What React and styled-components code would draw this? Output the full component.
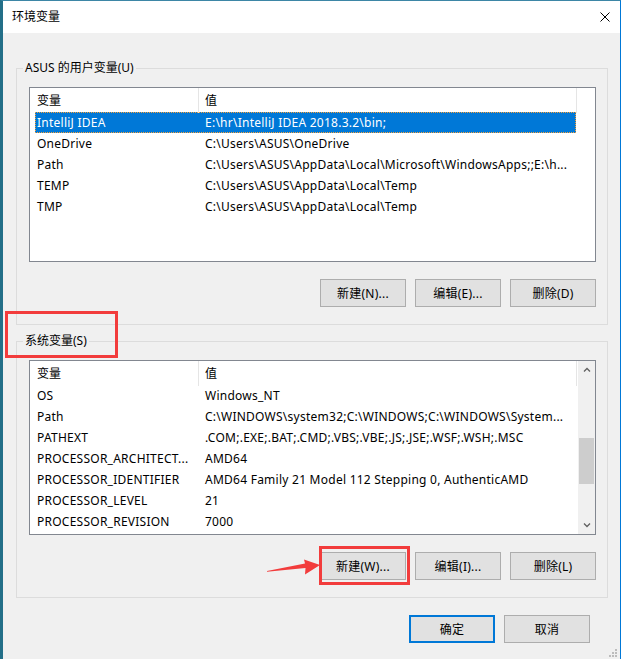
import React from "react";
import styled, { createGlobalStyle } from "styled-components";

const GlobalStyle = createGlobalStyle`
  html, body {
    margin: 0;
    padding: 0;
  }
  body {
    background: #1f6c85;
    font-family: "Microsoft YaHei UI", "Segoe UI", "Noto Sans", "Noto Sans CJK SC", sans-serif;
    font-size: 12px;
    color: #000;
  }
  *, *::before, *::after {
    box-sizing: border-box;
  }
`;

const Window = styled.div`
  width: 621px;
  height: 659px;
  display: flex;
  flex-direction: column;
  background: #f0f0f0;
  border-left: 3px solid #236f88;
  border-top: 1px solid #3d86a6;
  border-right: 1px solid #0078d7;
`;

const TitleBar = styled.div`
  height: 32px;
  flex: none;
  display: flex;
  align-items: center;
  justify-content: space-between;
  padding: 0 10px 0 9px;
  background: #fff;
`;

const Title = styled.span`
  line-height: 16px;
`;

const CloseIcon = styled.svg`
  display: block;
  width: 10px;
  height: 10px;
`;

const Body = styled.div`
  flex: 1;
  position: relative;
  display: flex;
  flex-direction: column;
  padding: 27px 12px 0 13px;
`;

const Group = styled.fieldset`
  margin: 0 0 ${(p) => p.$gap || 0}px;
  padding: 0;
  min-width: 0;
  border: 1px solid #dcdcdc;
`;

const Legend = styled.legend`
  position: relative;
  margin-left: 6px;
  padding: 0 2px;
  line-height: 16px;

  ${(p) =>
    p.$marked &&
    `
    &::after {
      content: "";
      position: absolute;
      left: -18px;
      top: -22px;
      width: 113px;
      height: 47px;
      border: 3px solid #f23c3c;
    }
  `}
`;

const GroupBody = styled.div`
  padding: 11px 11px 17px 12px;
`;

const ListBox = styled.div`
  height: 175px;
  display: flex;
  background: #fff;
  border: 1px solid #828790;
  overflow: hidden;
`;

const ListMain = styled.div`
  flex: 1;
  min-width: 0;
`;

const Header = styled.div`
  display: grid;
  grid-template-columns: 169px 378px 1fr;
  height: 24px;
`;

const HeaderCell = styled.div`
  padding-left: ${(p) => p.$pad}px;
  line-height: 25px;
  border-right: ${(p) => (p.$last ? "none" : "1px solid #e5e5e5")};
`;

const Row = styled.div`
  display: grid;
  grid-template-columns: 164px 1fr;
  width: 541px;
  height: 21px;
  margin-left: 5px;
  line-height: 22px;
  letter-spacing: 0.25px;
  white-space: nowrap;
  background: ${(p) => (p.$selected ? "#0078d7" : "transparent")};
  color: ${(p) => (p.$selected ? "#fff" : "#000")};
  outline: ${(p) => (p.$selected ? "1px dotted #f7a23a" : "none")};
  outline-offset: -1px;
`;

const Cell = styled.div`
  padding-left: ${(p) => p.$pad}px;
  overflow: hidden;
`;

const ScrollBar = styled.div`
  width: 17px;
  flex: none;
  display: flex;
  flex-direction: column;
  background: #f0f0f0;
`;

const ScrollArrow = styled.div`
  height: 17px;
  flex: none;
  display: flex;
  align-items: center;
  justify-content: center;
`;

const ScrollTrack = styled.div`
  flex: 1;
  padding: 0 1px;
`;

const Thumb = styled.div`
  margin-top: ${(p) => p.$offset}px;
  height: ${(p) => p.$size}px;
  background: #cdcdcd;
`;

const ButtonRow = styled.div`
  display: flex;
  justify-content: flex-end;
  gap: 9px;
  margin-top: 17px;
  margin-right: ${(p) => p.$right || 0}px;
`;

const Button = styled.button`
  width: 86px;
  height: 28px;
  padding: 0;
  font-family: inherit;
  font-size: 12px;
  letter-spacing: 0.25px;
  color: #000;
  background: #e1e1e1;
  border: ${(p) => (p.$default ? "2px solid #0078d7" : "1px solid #adadad")};
  border-radius: 0;
`;

const Marked = styled.span`
  position: relative;
  display: block;

  &::before {
    content: "";
    position: absolute;
    left: -1px;
    top: -6px;
    width: 91px;
    height: 39px;
    border: 3px solid #f23c3c;
    pointer-events: none;
  }
`;

const Arrow = styled.svg`
  position: absolute;
  left: -54px;
  top: 6px;
  width: 56px;
  height: 18px;
`;

const Grip = styled.svg`
  position: absolute;
  right: 2px;
  bottom: 1px;
  width: 10px;
  height: 9px;
`;

const userVars = [
  ["IntelliJ IDEA", "E:\\hr\\IntelliJ IDEA 2018.3.2\\bin;"],
  ["OneDrive", "C:\\Users\\ASUS\\OneDrive"],
  ["Path", "C:\\Users\\ASUS\\AppData\\Local\\Microsoft\\WindowsApps;;E:\\h..."],
  ["TEMP", "C:\\Users\\ASUS\\AppData\\Local\\Temp"],
  ["TMP", "C:\\Users\\ASUS\\AppData\\Local\\Temp"],
];

const systemVars = [
  ["OS", "Windows_NT"],
  ["Path", "C:\\WINDOWS\\system32;C:\\WINDOWS;C:\\WINDOWS\\System..."],
  ["PATHEXT", ".COM;.EXE;.BAT;.CMD;.VBS;.VBE;.JS;.JSE;.WSF;.WSH;.MSC"],
  ["PROCESSOR_ARCHITECT...", "AMD64"],
  ["PROCESSOR_IDENTIFIER", "AMD64 Family 21 Model 112 Stepping 0, AuthenticAMD"],
  ["PROCESSOR_LEVEL", "21"],
  ["PROCESSOR_REVISION", "7000"],
];

const Chevron = ({ up }) => (
  <svg width="8" height="5" viewBox="0 0 8 5">
    <path
      d={up ? "M1 4.5 L4 1.5 L7 4.5" : "M1 0.5 L4 3.5 L7 0.5"}
      fill="none"
      stroke="#606060"
      strokeWidth="1.3"
    />
  </svg>
);

const VarList = ({ rows, selected, scroll }) => (
  <ListBox>
    <ListMain>
      <Header>
        <HeaderCell $pad={7}>变量</HeaderCell>
        <HeaderCell $pad={6}>值</HeaderCell>
        <HeaderCell $last />
      </Header>
      {rows.map(([name, value], i) => (
        <Row key={name + i} $selected={i === selected}>
          <Cell $pad={2}>{name}</Cell>
          <Cell $pad={6}>{value}</Cell>
        </Row>
      ))}
    </ListMain>
    {scroll && (
      <ScrollBar>
        <ScrollArrow>
          <Chevron up />
        </ScrollArrow>
        <ScrollTrack>
          <Thumb $offset={60} $size={46} />
        </ScrollTrack>
        <ScrollArrow>
          <Chevron />
        </ScrollArrow>
      </ScrollBar>
    )}
  </ListBox>
);

export default function App() {
  return (
    <>
      <GlobalStyle />
      <Window>
        <TitleBar>
          <Title>环境变量</Title>
          <CloseIcon viewBox="0 0 10 10">
            <path d="M0.5 0.5 L9.5 9.5 M9.5 0.5 L0.5 9.5" stroke="#000" strokeWidth="1" />
          </CloseIcon>
        </TitleBar>
        <Body>
          <Group $gap={8}>
            <Legend>ASUS 的用户变量(U)</Legend>
            <GroupBody>
              <VarList rows={userVars} selected={0} />
              <ButtonRow>
                <Button>新建(N)...</Button>
                <Button>编辑(E)...</Button>
                <Button>删除(D)</Button>
              </ButtonRow>
            </GroupBody>
          </Group>
          <Group>
            <Legend $marked>系统变量(S)</Legend>
            <GroupBody>
              <VarList rows={systemVars} scroll />
              <ButtonRow>
                <Marked>
                  <Arrow viewBox="0 0 56 18">
                    <polygon
                      points="1,13 39,5.5 38,1.5 54,7 39,16.5 39.5,10 1,13.8"
                      fill="#f23c3c"
                    />
                  </Arrow>
                  <Button>新建(W)...</Button>
                </Marked>
                <Button>编辑(I)...</Button>
                <Button>删除(L)</Button>
              </ButtonRow>
            </GroupBody>
          </Group>
          <ButtonRow $right={18}>
            <Button $default>确定</Button>
            <Button>取消</Button>
          </ButtonRow>
          <Grip viewBox="0 0 10 9">
            <g fill="#bcbcbc">
              <rect x="7" y="0" width="2" height="2" />
              <rect x="4" y="3" width="2" height="2" />
              <rect x="7" y="3" width="2" height="2" />
              <rect x="1" y="6" width="2" height="2" />
              <rect x="4" y="6" width="2" height="2" />
              <rect x="7" y="6" width="2" height="2" />
            </g>
          </Grip>
        </Body>
      </Window>
    </>
  );
}
